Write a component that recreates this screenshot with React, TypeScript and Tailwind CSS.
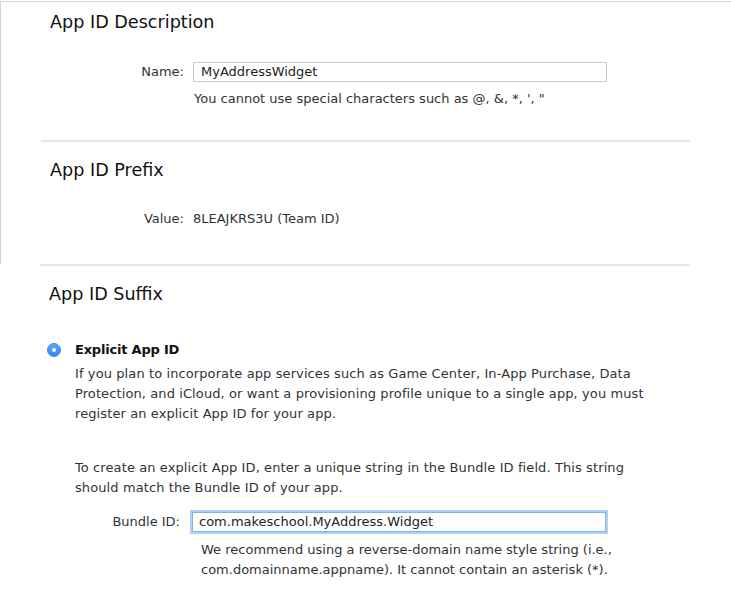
import React from "react";

const font = { fontFamily: '"DejaVu Sans", "Noto Sans", sans-serif' };

export default function App() {
  return (
    <div className="w-[731px] h-[594px] bg-white overflow-hidden text-[#333]" style={font}>
      <div className="mt-[1px] border-t border-l border-[#d4d4d4] h-[263px] flex flex-col">
        <div className="pl-[49px] pt-[8px] h-[32px] text-[17.6px] leading-[24px] text-[#111]">App ID Description</div>
        <div className="mt-[28px] flex items-center h-[20px]">
          <div className="w-[183px] text-right text-[13px]">Name:</div>
          <div className="ml-[9px] w-[414px] h-[20px] border border-[#c8c8c8] px-[7px] text-[13px] leading-[18px] text-[#222]">MyAddressWidget</div>
        </div>
        <div className="pl-[193px] mt-[7px] text-[13px] leading-[20px]">You cannot use special characters such as @, &amp;, *, ', "</div>
        <div className="ml-[40px] mt-[31px] w-[649px] h-[2px] bg-[#e6e6e6]" />
        <div className="pl-[49px] mt-[16px] text-[17.6px] leading-[24px] text-[#111]">App ID Prefix</div>
        <div className="mt-[27px] flex items-center h-[20px] text-[13px]">
          <div className="w-[183px] text-right">Value:</div>
          <div className="ml-[9px]">8LEAJKRS3U (Team ID)</div>
        </div>
      </div>
      <div className="ml-[40px] w-[649px] h-[2px] bg-[#e6e6e6]" />
      <div className="pl-[49px] mt-[16px] text-[17.6px] leading-[24px] text-[#111]">App ID Suffix</div>
      <div className="mt-[34px] flex items-center h-[20px]">
        <div className="ml-[47px] w-[14px] h-[14px] rounded-full bg-gradient-to-b from-[#5aa8fb] to-[#2f86f0] border border-[#3a8de8] flex items-center justify-center">
          <div className="w-[4px] h-[4px] rounded-full bg-white" />
        </div>
        <div className="ml-[14px] text-[13px] font-bold text-[#111] tracking-[-0.2px]">Explicit App ID</div>
      </div>
      <div className="pl-[75px] mt-[4px] w-[720px] text-[13px] leading-[20px] tracking-[0.1px]">
        <p>If you plan to incorporate app services such as Game Center, In-App Purchase, Data<br />Protection, and iCloud, or want a provisioning profile unique to a single app, you must<br />register an explicit App ID for your app.</p>
        <p className="mt-[34px]">To create an explicit App ID, enter a unique string in the Bundle ID field. This string<br />should match the Bundle ID of your app.</p>
      </div>
      <div className="mt-[14px] flex items-center h-[20px]">
        <div className="w-[180px] text-right text-[13px]">Bundle ID:</div>
        <div className="ml-[12px] w-[414px] h-[20px] border border-[#7eb4ea] shadow-[0_0_0_2px_rgba(110,170,240,0.55)] px-[6px] text-[13px] leading-[18px] text-[#222]">com.makeschool.MyAddress.Widget</div>
      </div>
      <div className="pl-[201px] mt-[8px] text-[13px] leading-[20px]">We recommend using a reverse-domain name style string (i.e.,<br />com.domainname.appname). It cannot contain an asterisk (*).</div>
    </div>
  );
}
